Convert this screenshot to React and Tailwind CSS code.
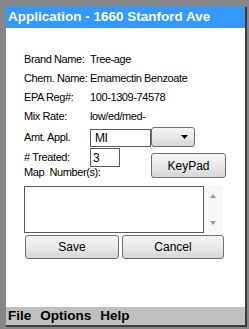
import { useState } from "react";

const btn =
  "rounded-[3px] border border-[#707070] bg-gradient-to-b from-[#f4f4f4] via-[#e9e9e9] to-[#d6d6d6] text-[12px] text-black";

function Field({ label, value }) {
  return (
    <div className="flex h-[19px] items-center">
      <span className="w-[66px] shrink-0">{label}</span>
      <span>{value}</span>
    </div>
  );
}

export default function App() {
  const [amount, setAmount] = useState("MI");
  const [treated, setTreated] = useState("3");
  const [maps, setMaps] = useState("");

  return (
    <div
      className="flex h-[329px] w-[249px] flex-col bg-[#868686] pb-[2px] pl-[6px] pr-[2px] pt-[7px]"
      style={{ fontFamily: '"Liberation Sans", Arial, sans-serif' }}
    >
      <div className="flex flex-1 flex-col border-r-2 border-[#3c3c3c]">
        <div className="flex h-[21px] items-center bg-[#3399ff] pl-[2px] text-[13.5px] font-bold text-white">
          Application - 1660 Stanford Ave
        </div>

        <div className="flex flex-1 flex-col bg-white pl-[18px] pt-[22px] text-[11px] tracking-[-0.4px] text-black">
          <Field label="Brand Name:" value="Tree-age" />
          <Field label="Chem. Name:" value="Emamectin Benzoate" />
          <Field label="EPA Reg#:" value="100-1309-74578" />
          <Field label="Mix Rate:" value="low/ed/med-" />

          <div className="mt-[1px] flex h-[21px] items-start">
            <span className="mt-[2px] w-[66px] shrink-0">Amt. Appl.</span>
            <input
              value={amount}
              onChange={(e) => setAmount(e.target.value)}
              className="mt-[2px] h-[18px] w-[61px] border border-[#5a5a5a] px-[4px] text-[12px] outline-none"
            />
            <button className={`${btn} flex h-[20px] w-[44px] items-center justify-end pr-[6px]`}>
              <svg width="7" height="4" viewBox="0 0 7 4">
                <path d="M0 0h7L3.5 4z" fill="#000" />
              </svg>
            </button>
          </div>

          <div className="flex">
            <div className="flex w-[127px] flex-col">
              <div className="flex h-[19px] items-center">
                <span className="w-[66px] shrink-0">#&nbsp;Treated:</span>
                <input
                  value={treated}
                  onChange={(e) => setTreated(e.target.value)}
                  className="h-[19px] w-[30px] border border-[#5a5a5a] px-[2px] text-[12px] outline-none"
                />
              </div>
              <div className="h-[11px] leading-[11px]">Map&nbsp; Number(s):</div>
            </div>
            <button className={`${btn} mt-[5px] h-[25px] w-[75px] tracking-normal`}>KeyPad</button>
          </div>

          <div className="mt-[8px] flex h-[47px]">
            <textarea
              value={maps}
              onChange={(e) => setMaps(e.target.value)}
              className="h-full w-[180px] resize-none border border-[#5a5a5a] outline-none"
            />
            <div className="flex w-[18px] flex-col items-center justify-between bg-[#f6f6f6] py-[8px]">
              <svg width="6" height="4" viewBox="0 0 6 4">
                <path d="M3 0l3 4H0z" fill="#9a9a9a" />
              </svg>
              <svg width="6" height="4" viewBox="0 0 6 4">
                <path d="M0 0h6L3 4z" fill="#9a9a9a" />
              </svg>
            </div>
          </div>

          <div className="ml-[1px] mt-[2px] flex h-[24px] gap-[3px] tracking-normal">
            <button className={`${btn} w-[94px]`}>Save</button>
            <button className={`${btn} w-[102px]`}>Cancel</button>
          </div>
        </div>

        <div className="flex h-[20px] items-center gap-[9px] border-b-2 border-[#3c3c3c] bg-[#c0c0c0] pl-[2px] text-[13.5px] font-bold text-black">
          <span>File</span>
          <span>Options</span>
          <span>Help</span>
        </div>
      </div>
    </div>
  );
}
